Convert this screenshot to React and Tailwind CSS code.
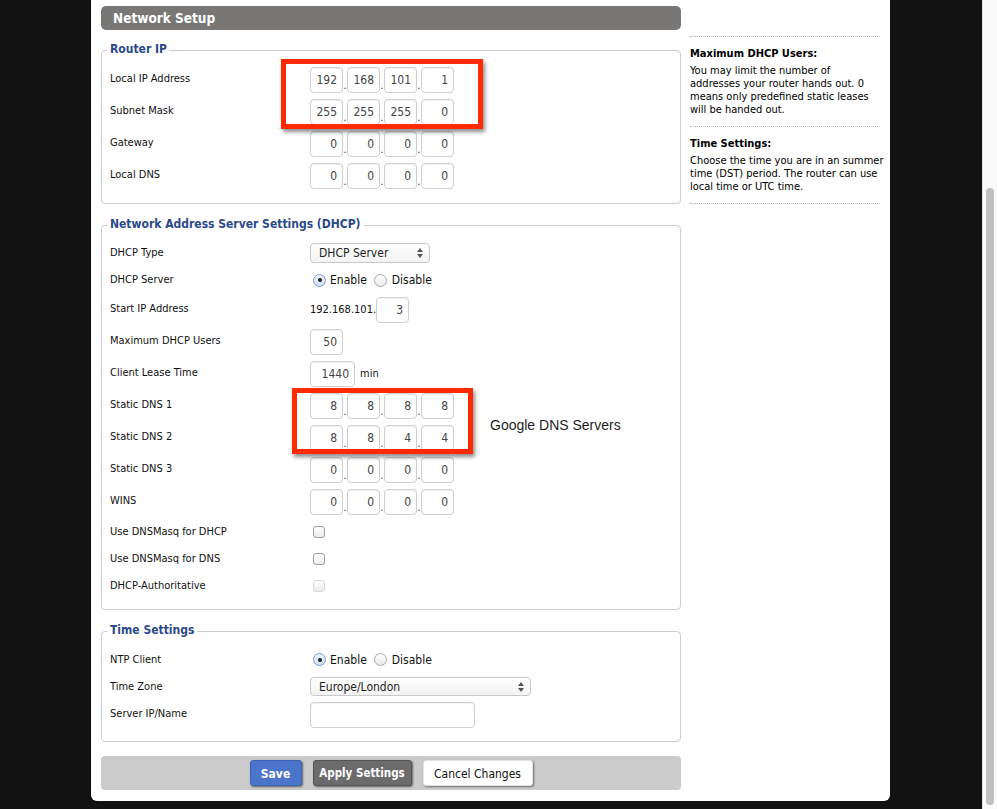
import React from "react";

const font = "font-['DejaVu_Sans_Condensed','DejaVu_Sans',sans-serif]";

function Box({ value = "", w = "w-[33px]" }) {
  return (
    <input
      readOnly
      value={value}
      className={`${w} h-[26px] rounded-[4px] border border-[#cfcfcf] bg-white pr-[5px] text-right text-[12px] text-[#444] outline-none shadow-[inset_0_1px_1px_rgba(0,0,0,0.06)]`}
    />
  );
}

function Ip({ parts }) {
  return (
    <div className="flex items-end">
      {parts.map((p, i) => (
        <React.Fragment key={i}>
          {i > 0 && (
            <span className="w-[4px] text-center text-[10px] leading-[14px] text-[#223]">.</span>
          )}
          <Box value={p} />
        </React.Fragment>
      ))}
    </div>
  );
}

function Radio({ checked }) {
  return checked ? (
    <span className="flex h-[13px] w-[13px] shrink-0 items-center justify-center rounded-full border border-[#7d9ccc] bg-gradient-to-b from-[#eef4fc] to-[#cfdff3]">
      <span className="h-[4px] w-[4px] rounded-full bg-[#1d1d1d]" />
    </span>
  ) : (
    <span className="block h-[13px] w-[13px] shrink-0 rounded-full border border-[#a9a9a9] bg-gradient-to-b from-white to-[#e9e9e9]" />
  );
}

function EnableDisable() {
  return (
    <div className="ml-[3px] flex items-center text-[12px] text-[#111]">
      <Radio checked />
      <span className="ml-[4px]">Enable</span>
      <span className="ml-[7px] flex">
        <Radio />
      </span>
      <span className="ml-[5px]">Disable</span>
    </div>
  );
}

function Check({ disabled }) {
  return (
    <span
      className={`ml-[3px] block h-[12px] w-[12px] rounded-[3px] border bg-gradient-to-b from-white to-[#ececec] ${
        disabled ? "border-[#d6d6d6]" : "border-[#9c9c9c]"
      }`}
    />
  );
}

function Select({ value, w }) {
  return (
    <div
      className={`${w} flex items-center justify-between rounded-[4px] border border-[#c9c9c9] bg-gradient-to-b from-white to-[#f3f3f3] pl-[8px] pr-[6px] text-[12px] text-[#222]`}
    >
      <span>{value}</span>
      <svg width="6" height="10" viewBox="0 0 6 10">
        <path d="M3 0L6 4H0z M3 10L0 6h6z" fill="#555" />
      </svg>
    </div>
  );
}

function Row({ label, h, up, children }) {
  return (
    <div className={`flex items-center ${h}`}>
      <div className={`w-[200px] text-[11px] text-[#111] ${up ? "pb-[2px]" : "pt-[1px]"}`}>{label}</div>
      {children}
    </div>
  );
}

function Fieldset({ legend, className, children }) {
  return (
    <div className={`relative rounded-[4px] border border-[#cccccc] pl-[8px] ${className}`}>
      <span className="absolute -top-[10px] left-[5px] bg-white px-[3px] text-[12px] font-bold leading-[16px] text-[#2b4a8c]">
        {legend}
      </span>
      {children}
    </div>
  );
}

function Highlight({ className }) {
  return (
    <div
      className={`pointer-events-none absolute border-[5px] border-[#ff2a00] shadow-[2px_3px_4px_rgba(0,0,0,0.45)] ${className}`}
    />
  );
}

export default function App() {
  return (
    <div className={`flex h-[809px] w-[997px] overflow-hidden bg-[#121212] pl-[91px] ${font}`}>
      {/* panel */}
      <div className="flex h-[801px] w-[799px] gap-[9px] rounded-b-[6px] bg-white pl-[10px] pr-[10px]">
        {/* main column */}
        <div className="w-[580px] pt-[6px]">
          <div className="flex h-[24px] items-center rounded-[5px] bg-[#787776] pl-[12px] pt-[1px] text-[13.5px] font-bold text-white">
            Network Setup
          </div>

          <Fieldset legend="Router IP" className="mt-[20px] pb-[11px] pt-[13px]">
            <Row label="Local IP Address" h="h-[32px]" up>
              <Ip parts={["192", "168", "101", "1"]} />
            </Row>
            <Row label="Subnet Mask" h="h-[32px]" up>
              <Ip parts={["255", "255", "255", "0"]} />
            </Row>
            <Row label="Gateway" h="h-[32px]" up>
              <Ip parts={["0", "0", "0", "0"]} />
            </Row>
            <Row label="Local DNS" h="h-[32px]" up>
              <Ip parts={["0", "0", "0", "0"]} />
            </Row>
            <Highlight className="left-[179px] top-[8px] h-[70px] w-[202px]" />
          </Fieldset>

          <Fieldset
            legend="Network Address Server Settings (DHCP)"
            className="mt-[21px] pb-[10px] pt-[14px]"
          >
            <Row label="DHCP Type" h="h-[26px]">
              <Select value="DHCP Server" w="w-[120px] h-[20px]" />
            </Row>
            <Row label="DHCP Server" h="h-[28px]">
              <EnableDisable />
            </Row>
            <Row label="Start IP Address" h="h-[32px]" up>
              <span className="text-[11px] text-[#111]">192.168.101.</span>
              <Box value="3" />
            </Row>
            <Row label="Maximum DHCP Users" h="h-[32px]" up>
              <Box value="50" />
            </Row>
            <Row label="Client Lease Time" h="h-[32px]" up>
              <Box value="1440" w="w-[45px]" />
              <span className="ml-[5px] text-[11px] text-[#111]">min</span>
            </Row>
            <Row label="Static DNS 1" h="h-[32px]" up>
              <Ip parts={["8", "8", "8", "8"]} />
            </Row>
            <Row label="Static DNS 2" h="h-[32px]" up>
              <Ip parts={["8", "8", "4", "4"]} />
            </Row>
            <Row label="Static DNS 3" h="h-[32px]" up>
              <Ip parts={["0", "0", "0", "0"]} />
            </Row>
            <Row label="WINS" h="h-[32px]" up>
              <Ip parts={["0", "0", "0", "0"]} />
            </Row>
            <Row label="Use DNSMasq for DHCP" h="h-[27px]">
              <Check />
            </Row>
            <Row label="Use DNSMasq for DNS" h="h-[27px]">
              <Check />
            </Row>
            <Row label="DHCP-Authoritative" h="h-[27px]">
              <Check disabled />
            </Row>
            <Highlight className="left-[190px] top-[162px] h-[66px] w-[181px]" />
            <span className="absolute left-[388px] top-[191px] font-['Liberation_Sans',Arial,sans-serif] text-[14px] leading-[16px] text-[#1e1e1e]">
              Google DNS Servers
            </span>
          </Fieldset>

          <Fieldset legend="Time Settings" className="mt-[21px] pb-[11px] pt-[14px]">
            <Row label="NTP Client" h="h-[27px]">
              <EnableDisable />
            </Row>
            <Row label="Time Zone" h="h-[27px]">
              <Select value="Europe/London" w="w-[221px] h-[19px]" />
            </Row>
            <Row label="Server IP/Name" h="h-[30px]" up>
              <Box w="w-[165px]" />
            </Row>
          </Fieldset>

          <div className="mt-[14px] flex h-[34px] items-center justify-center gap-[11px] rounded-[4px] bg-[#cbcbcb]">
            <button className="h-[26px] w-[52px] rounded-[3px] border border-[#3f63b3] bg-[#4b74cb] pt-[1px] text-[12px] font-bold text-white shadow-[1px_1px_2px_rgba(0,0,0,0.5)]">
              Save
            </button>
            <button className="h-[26px] w-[99px] rounded-[3px] border border-[#555] bg-[#6b6b6b] pt-[1px] text-[11.5px] font-bold text-white shadow-[1px_1px_2px_rgba(0,0,0,0.5)]">
              Apply Settings
            </button>
            <button className="h-[26px] w-[110px] rounded-[3px] border border-[#e2e2e2] bg-white pt-[1px] text-[12px] text-[#111] shadow-[1px_1px_2px_rgba(0,0,0,0.45)]">
              Cancel Changes
            </button>
          </div>
        </div>

        {/* help sidebar */}
        <div className="w-[190px] pt-[36px] text-[11px] leading-[13px] text-black">
          <div className="border-t border-dotted border-[#b9b9b9] pb-[10px] pt-[10px]">
            <div className="font-bold">Maximum DHCP Users:</div>
            <p className="mt-[4px] whitespace-nowrap">
              You may limit the number of
              <br />
              addresses your router hands out. 0
              <br />
              means only predefined static leases
              <br />
              will be handed out.
            </p>
          </div>
          <div className="border-y border-dotted border-[#b9b9b9] pb-[10px] pt-[10px]">
            <div className="font-bold">Time Settings:</div>
            <p className="mt-[4px] whitespace-nowrap">
              Choose the time you are in an summer
              <br />
              time (DST) period. The router can use
              <br />
              local time or UTC time.
            </p>
          </div>
        </div>
      </div>

      <div className="flex-1" />

      {/* scrollbar */}
      <div className="flex h-full w-[15px] flex-col items-center border-l border-[#e4e4e4] bg-[#fafafa] pb-[4px] pt-[188px]">
        <div className="w-[8px] flex-1 rounded-full bg-[#c1c1c1]" />
      </div>
    </div>
  );
}
